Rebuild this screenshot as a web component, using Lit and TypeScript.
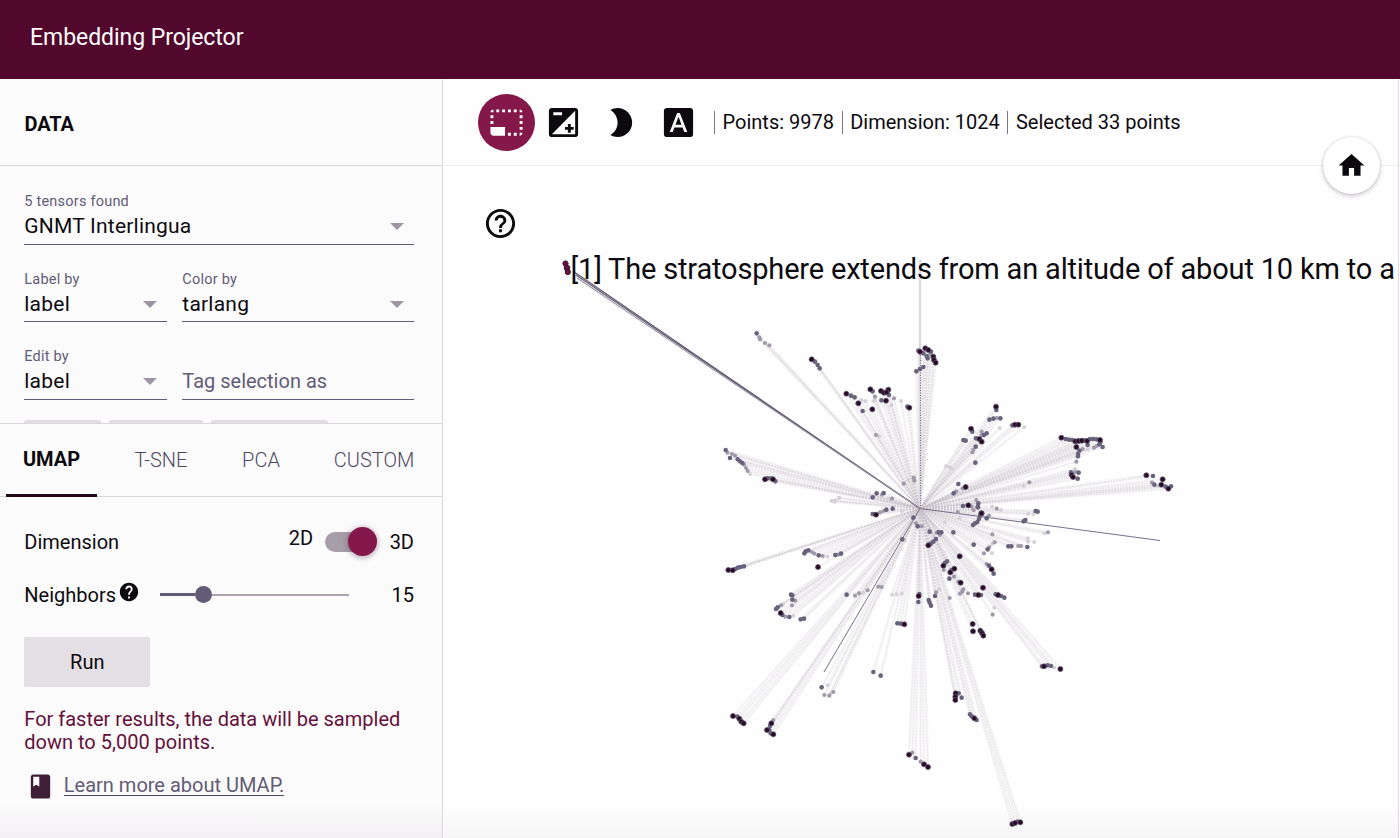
import { LitElement, html, svg, css } from "lit";
import { customElement, property } from "lit/decorators.js";

type Shade = "d" | "s" | "g" | "l";
type Point = { x: number; y: number; shade: Shade };

/* Each cluster group has an origin and a scale of three units per pixel. */
const GROUPS: { ox: number; oy: number; pts: string }[] = [
  {
    ox: 550, oy: 250,
    pts: "620,250,s 628,262,g 630,268,g 645,279,g 658,286,g 785,328,d 795,335,s 803,345,s 809,355,s",
  },
  {
    ox: 820, oy: 320,
    pts: `300,95,d 295,92,s 316,85,d 325,90,d 333,95,s 340,110,d 342,120,d 347,128,d 310,100,s 320,108,s 323,115,s 331,103,g
    289,154,s 300,147,s 310,141,s 79,221,d 93,227,s 104,232,s 115,250,d 128,273,s 157,268,d 124,240,l 136,243,l 160,243,l 165,240,l 165,230,g
    151,208,d 158,214,s 183,213,d 192,218,d 205,209,d 200,217,d 207,225,s 222,235,g 243,243,l 184,241,s 198,242,d 214,256,l
    262,260,s 268,263,d 168,345,g 178,349,l 281,473,g 283,482,g 265,480,l 251,491,g
    528,260,d 529,270,s 508,299,s 520,296,s 530,294,g 541,295,s 539,324,l 577,316,s 585,314,d 595,314,d 613,321,l
    453,326,d 457,335,s 430,360,s 437,362,s 468,355,s 478,357,d 485,365,d 485,335,g 485,345,g 492,345,s 500,340,s
    467,380,s 460,390,g 457,397,g 466,428,s 378,439,l 396,446,l 390,442,l 415,492,s 437,501,d 428,505,g 401,520,s 408,514,g
    429,558,s 445,556,d 455,560,g 469,540,g 475,550,s 473,560,s 485,580,d 517,560,l 530,566,g 543,570,l 611,498,l 628,487,g
    158,532,s 170,520,s 191,519,s 186,524,g 205,536,l 216,536,g 158,582,s 168,584,d 180,577,g 190,573,g 199,569,s 218,566,s
    246,573,l 38,543,l 44,545,l 57,534,l`,
  },
  {
    ox: 1000, oy: 380,
    pts: `184,173,d 197,177,s 207,179,s 217,180,s 226,184,d 235,183,d 245,182,d 253,181,s 261,183,d 270,177,s 280,177,s 290,178,s
    300,180,d 301,187,s 298,193,s 308,201,s 290,198,g 282,203,g 263,195,s 263,208,l 248,207,g 229,201,d 238,212,s 234,222,s
    234,229,s 229,245,g 225,267,l 213,277,s 226,276,g 236,278,s 215,285,d 219,291,d 233,296,s 439,286,d 459,288,s 488,298,d
    456,308,g 463,314,s 473,318,l 484,314,d 497,320,s 505,326,d 513,319,s 107,393,s 113,395,s 100,402,l 85,401,l 76,420,s
    71,424,s 144,457,g 133,460,l 84,475,l 84,485,l 103,486,l 82,501,s 63,498,g 55,498,g 34,499,s 25,499,s`,
  },
  {
    ox: 700, oy: 430,
    pts: `77,60,s 82,68,g 90,84,s 96,72,g 105,77,g 113,88,s 120,94,s 127,99,s 132,104,g 138,114,g 143,123,g 150,132,l
    195,148,d 203,145,s 213,145,s 219,148,d 226,154,s 395,212,l 405,211,l 417,203,l 85,420,d 98,421,d 106,417,s 114,413,s
    122,411,s 132,409,s 313,370,s 317,364,s 325,361,s 335,366,g 343,371,g 356,376,s 368,378,g 382,380,l 406,375,s 414,374,g
    423,371,s 354,411,d 273,494,s 277,496,s 277,509,s 286,512,g 276,526,g 250,522,l 243,526,g 233,532,s 228,537,s 242,549,d
    247,555,s 256,560,g 268,561,s 280,557,l 302,568,s 312,566,s 440,494,s 465,497,g 477,490,g 490,489,l 503,481,g
    535,470,g 545,471,g 576,494,l 590,493,l 605,491,l 592,580,s 602,581,s 613,583,d 607,328,s 615,332,l 640,263,s
    648,280,g 653,289,s`,
  },
  {
    ox: 880, oy: 480,
    pts: `233,96,g 238,115,l 294,82,s 281,90,g 304,100,d 300,108,s 297,117,s 292,126,s 285,130,s 279,135,s 320,115,s 327,107,g
    125,139,g 194,126,l 149,155,s 170,158,g 176,157,s 184,157,s 220,157,s 180,165,g 168,177,s 160,185,s 153,191,s 145,196,d
    281,194,s 337,163,g 344,187,g 336,192,l 328,201,g 323,208,s 312,220,g 336,220,l 239,229,d 201,244,s 195,249,s 190,257,d
    191,270,g 223,266,d 215,270,s 211,277,d 222,290,g 208,296,s 242,308,d 235,305,g 320,252,g 327,257,s 335,268,d 341,281,s
    309,323,d 250,328,g 247,335,g 240,341,g 264,340,g 285,344,s 295,345,d 303,345,s 347,343,s 354,345,d 363,348,s 373,353,s
    343,383,l 338,404,g 209,354,g 177,328,l 168,337,g 165,348,s 116,348,d 118,342,s 115,366,s 146,360,s 149,368,s 153,377,s
    278,432,d 279,454,d 301,452,d 306,459,d 310,467,d`,
  },
  {
    ox: 710, oy: 580,
    pts: `69,408,d 82,410,s 88,416,d 94,425,d 101,430,d 190,420,g 184,430,d 180,438,s 171,450,d 178,450,s 182,460,s 190,463,d
    335,322,s 353,316,l 343,345,g 358,347,g 362,340,l 370,336,g 490,276,s 512,287,s 597,524,d 607,518,g 617,534,s 632,545,g
    642,553,d 654,561,d`,
  },
  {
    ox: 880, oy: 640,
    pts: `227,160,d 226,170,d 226,180,d 236,160,s 245,173,s 270,223,s 275,229,s 283,235,d 290,240,s 397,552,d 405,549,d
    413,545,s 421,547,d 486,79,s 492,79,d 503,76,s 513,78,s 523,83,l 541,87,d`,
  },
];

const POINTS: Point[] = GROUPS.flatMap((g) =>
  g.pts.trim().split(/\s+/).map((t) => {
    const [x, y, shade] = t.split(",");
    return { x: g.ox + Number(x) / 3, y: g.oy + Number(y) / 3, shade: shade as Shade };
  })
);

const RADIUS: Record<Shade, number> = { d: 2.5, s: 2.3, g: 2.1, l: 2 };

const ICONS: Record<string, string> = {
  select:
    "M23 15h-2v2h2v-2zm0-4h-2v2h2v-2zm0 8h-2v2c1 0 2-1 2-2zM15 3h-2v2h2V3zm8 4h-2v2h2V7zm-2-4v2h2c0-1-1-2-2-2zM3 21h8v-6H1v4c0 1.1.9 2 2 2zM3 7H1v2h2V7zm12 12h-2v2h2v-2zm4-16h-2v2h2V3zm0 16h-2v2h2v-2zM3 3C2 3 1 4 1 5h2V3zm0 8H1v2h2v-2zm8-8H9v2h2V3zM7 3H5v2h2V3z",
  exposure:
    "M15 17v2h2v-2h2v-2h-2v-2h-2v2h-2v2h2zm5-15H4c-1.1 0-2 .9-2 2v16c0 1.1.9 2 2 2h16c1.1 0 2-.9 2-2V4c0-1.1-.9-2-2-2zM5 5h6v2H5V5zm15 15H4L20 4v16z",
  moon: "M10 2c-1.82 0-3.53.5-5 1.35C7.99 5.08 10 8.3 10 12s-2.01 6.92-5 8.65C6.47 21.5 8.18 22 10 22c5.52 0 10-4.48 10-10S15.52 2 10 2z",
  labels:
    "M9.93 13.5h4.14L12 7.98zM20 2H4c-1.1 0-2 .9-2 2v16c0 1.1.9 2 2 2h16c1.1 0 2-.9 2-2V4c0-1.1-.9-2-2-2zm-4.05 16.5l-1.14-3H9.17l-1.12 3H5.96l5.11-13h1.86l5.11 13h-2.09z",
  home: "M10 20v-6h4v6h5v-8h3L12 3 2 12h3v8z",
  help: "M12 2C6.48 2 2 6.48 2 12s4.48 10 10 10 10-4.48 10-10S17.52 2 12 2zm1 17h-2v-2h2v2zm2.07-7.75l-.9.92C13.45 12.9 13 13.5 13 15h-2v-.5c0-1.1.45-2.1 1.17-2.83l1.24-1.26c.37-.36.59-.86.59-1.41 0-1.1-.9-2-2-2s-2 .9-2 2H8c0-2.21 1.79-4 4-4s4 1.79 4 4c0 .88-.36 1.68-.93 2.25z",
  helpOutline:
    "M11 18h2v-2h-2v2zm1-16C6.48 2 2 6.48 2 12s4.48 10 10 10 10-4.48 10-10S17.52 2 12 2zm0 18c-4.41 0-8-3.59-8-8s3.59-8 8-8 8 3.59 8 8-3.59 8-8 8zm0-14c-2.21 0-4 1.79-4 4h2c0-1.1.9-2 2-2s2 .9 2 2c0 2-3 1.75-3 5h2c0-2.25 3-2.5 3-5 0-2.21-1.79-4-4-4z",
  book: "M18 2H6c-1.1 0-2 .9-2 2v16c0 1.1.9 2 2 2h12c1.1 0 2-.9 2-2V4c0-1.1-.9-2-2-2zM6 4h5v8l-2.5-1.5L6 12V4z",
};

@customElement("md-icon")
class MdIcon extends LitElement {
  @property() name = "";
  static styles = css`
    :host { display: inline-flex; width: 35px; height: 35px; flex: none; }
    svg { width: 100%; height: 100%; fill: currentColor; display: block; }
  `;
  render() {
    return html`<svg viewBox="0 0 24 24" aria-hidden="true"><path d=${ICONS[this.name]} /></svg>`;
  }
}

@customElement("select-field")
class SelectField extends LitElement {
  @property() label = "";
  @property() value = "";
  @property({ type: Boolean }) plain = false;
  static styles = css`
    :host { display: block; color: #0c0a0e; }
    .field { height: 51.5px; box-sizing: border-box; border-bottom: 1.5px solid #625c76; }
    .label { height: 16px; line-height: 17px; font-size: 14.5px; letter-spacing: .22px; color: #625c76; white-space: pre; }
    .row { height: 33.5px; display: flex; align-items: center; justify-content: space-between; padding-right: 10px; }
    .value { font-size: 21px; line-height: 33px; letter-spacing: .22px; white-space: nowrap; padding-top: 2px; }
    .plain { color: #625c76; font-size: 20px; letter-spacing: 0; }
    .arrow { width: 0; height: 0; border: 7px solid transparent; border-top-color: #9d95a4; border-bottom: 0; margin-top: 2px; }
  `;
  render() {
    return html`<div class="field">
      <div class="label">${this.label || " "}</div>
      <div class="row">
        <span class="value ${this.plain ? "plain" : ""}">${this.value}</span>
        ${this.plain ? "" : html`<span class="arrow"></span>`}
      </div>
    </div>`;
  }
}

@customElement("side-panel")
class SidePanel extends LitElement {
  static styles = css`
    :host { display: flex; flex-direction: column; width: 443px; box-sizing: border-box; border-right: 1.5px solid #dbd7dc; background: linear-gradient(#fcfbfc 0 725px, #f2f0f2 759px); color: #0c0a0e; flex: none; }
    .title { height: 87px; box-sizing: border-box; border-bottom: 1px solid #dbd7dc; padding: 3px 24.5px 0; display: flex; align-items: center; font-weight: 700; font-size: 20px; letter-spacing: -.1px; flex: none; }
    .data { height: 257px; box-sizing: border-box; overflow: hidden; padding: 27px 28.5px 0 24.3px; display: flex; flex-direction: column; gap: 26px; flex: none; }
    .pair { display: grid; grid-template-columns: 143px 1fr; gap: 15px; }
    .chips { display: flex; gap: 8px; margin-top: -5.5px; }
    .chip { height: 40px; border-radius: 3px; background: #e0dce1; flex: none; }
    .c1 { width: 77px; } .c2 { width: 94px; } .c3 { width: 117px; }
    .tabs { height: 74px; box-sizing: border-box; border-top: 1px solid #dbd7dc; border-bottom: 1px solid #dbd7dc; display: flex; padding-left: 6px; flex: none; }
    .tab { display: flex; align-items: center; justify-content: center; font-size: 20px; font-weight: 300; color: #4e4862; box-sizing: border-box; height: 73px; padding-bottom: 1px; }
    .active { width: 91px; font-weight: 700; color: #0c0a0e; border-bottom: 3px solid #210816; padding-bottom: 0; }
    .t2 { width: 128px; } .t3 { width: 72px; } .t4 { width: 154px; margin-right: -9px; }
    .controls { padding: 18px 28px 0 24.3px; font-size: 20px; }
    .row { display: flex; align-items: center; height: 53px; }
    .grow { flex: 1; }
    .two { padding-bottom: 8px; }
    .toggle { width: 51.5px; height: 29px; margin: 0 13px 0 12px; display: flex; align-items: center; }
    .track { width: 48px; height: 20px; border-radius: 10px; background: #a79ea9; display: flex; align-items: center; justify-content: flex-end; }
    .knob { width: 29px; height: 29px; border-radius: 50%; background: #84184b; margin-right: -4px; box-shadow: 0 1px 5px 1px rgba(60, 40, 60, .35); flex: none; }
    .mini { width: 22px; height: 22px; margin: -5px 0 0 2px; }
    .slider { width: 189px; height: 18px; margin-left: 20px; display: flex; align-items: center; }
    .fill { width: 35px; height: 2.5px; background: #625c76; }
    .thumb { width: 17px; height: 17px; border-radius: 50%; background: #625c76; }
    .rest { flex: 1; height: 2px; background: #aaa2ad; }
    .run { font: inherit; color: inherit; border: 0; padding: 0; display: block; margin-top: 16.3px; width: 126px; height: 49.5px; border-radius: 2px; background: #e3dfe4; }
    .note { margin: 21.2px 0 0; line-height: 23px; color: #65103b; font-size: 20px; white-space: nowrap; }
    .learn { display: flex; align-items: center; height: 30px; margin-top: 18px; }
    .book { width: 29px; height: 29px; margin-left: 2px; color: #3f1f38; }
    .link { color: #625c76; margin: -2px 0 0 8.5px; line-height: 20px; border-bottom: 1px solid #4c4560; white-space: nowrap; }
  `;
  render() {
    return html`
      <div class="title">DATA</div>
      <div class="data">
        <select-field label="5 tensors found" value="GNMT Interlingua"></select-field>
        <div class="pair">
          <select-field label="Label by" value="label"></select-field>
          <select-field label="Color by" value="tarlang"></select-field>
        </div>
        <div class="pair">
          <select-field label="Edit by" value="label"></select-field>
          <select-field plain value="Tag selection as"></select-field>
        </div>
        <div class="chips"><span class="chip c1"></span><span class="chip c2"></span><span class="chip c3"></span></div>
      </div>
      <div class="tabs">
        <div class="tab active">UMAP</div>
        <div class="tab t2">T-SNE</div>
        <div class="tab t3">PCA</div>
        <div class="tab t4">CUSTOM</div>
      </div>
      <div class="controls">
        <div class="row">
          <span>Dimension</span><span class="grow"></span><span class="two">2D</span>
          <span class="toggle"><span class="track"><span class="knob"></span></span></span><span>3D</span>
        </div>
        <div class="row">
          <span>Neighbors</span><md-icon class="mini" name="help"></md-icon>
          <span class="slider"><span class="fill"></span><span class="thumb"></span><span class="rest"></span></span>
          <span class="grow"></span><span>15</span>
        </div>
        <button class="run">Run</button>
        <p class="note">For faster results, the data will be sampled<br />down to 5,000 points.</p>
        <div class="learn"><md-icon class="book" name="book"></md-icon><a class="link">Learn more about UMAP.</a></div>
      </div>
    `;
  }
}

@customElement("scatter-plot")
class ScatterPlot extends LitElement {
  static styles = css`
    :host { display: block; flex: 1; min-height: 0; }
    svg { display: block; width: 954px; height: 672px; }
    .ray { stroke: #c9c2cb; stroke-width: .7; opacity: .4; stroke-dasharray: 2 1; }
    .band { stroke: #f4f2f4; stroke-width: 3; opacity: .55; }
    .axis { stroke: #77718a; stroke-width: 1; }
    .sel { stroke: #5c566e; stroke-width: 1.1; }
    .faint { stroke: #a098a6; }
    .up { stroke: #dedadf; stroke-width: 2.5; }
    .dots { stroke: #77718a; stroke-width: 1; stroke-dasharray: 1 1.5; }
    .d { fill: #2b0a26; stroke: #5a546c; stroke-width: .8; }
    .s { fill: #68637c; } .g { fill: #a099aa; } .l { fill: #d6d1d8; }
    .pick { fill: #6b1240; stroke: #33112c; stroke-width: 1; }
    .caption { font: 29px Roboto, "Liberation Sans", sans-serif; fill: #0c0a0e; }
  `;
  render() {
    const order: Shade[] = ["l", "g", "s", "d"];
    return html`<svg viewBox="444 166 954 672">
      ${POINTS.map((p) => svg`<line class="band" x1="920" y1="508.5" x2=${p.x} y2=${p.y} />`)}
      ${POINTS.map((p) => svg`<line class="ray" x1="920" y1="508.5" x2=${p.x} y2=${p.y} />`)}
      <line class="up" x1="920" y1="260" x2="920" y2="508" />
      <line class="dots" x1="920.5" y1="350" x2="920.5" y2="508" />
      <line class="axis" x1="920" y1="508.5" x2="1160" y2="540.5" />
      <line class="axis" x1="920" y1="508.5" x2="824" y2="672" />
      <line class="sel" x1="920" y1="508.5" x2="575" y2="272.5" />
      <line class="sel" x1="920" y1="508.5" x2="576" y2="275" />
      <line class="sel faint" x1="920" y1="508.5" x2="577" y2="278" />
      ${order.map((s) =>
        POINTS.filter((p) => p.shade === s).map((p) => svg`<circle class=${s} cx=${p.x} cy=${p.y} r=${RADIUS[s]} />`)
      )}
      <circle class="pick" cx="565.5" cy="263.5" r="2.6" /><circle class="pick" cx="567" cy="268" r="2.8" /><circle class="pick" cx="567.8" cy="272" r="2.6" />
      <text class="caption" x="570.5" y="279" textLength="824.5">[1] The stratosphere extends from an altitude of about 10 km to a</text>
    </svg>`;
  }
}

@customElement("app-root")
class AppRoot extends LitElement {
  static styles = css`
    :host { display: flex; flex-direction: column; width: 1400px; height: 838px; overflow: hidden; font-family: Roboto, "Liberation Sans", sans-serif; background: #fefefe; color: #0c0a0e; }
    .header { height: 79px; box-sizing: border-box; background: #52082c; color: #fff; font-size: 23px; letter-spacing: -.05px; padding: 0 30px 5px; display: flex; align-items: center; flex: none; }
    .body { flex: 1; display: flex; min-height: 0; }
    .main { flex: 1; display: flex; flex-direction: column; position: relative; border-right: 1px solid #dedade; margin: 0 1px 0 1px; box-sizing: border-box; min-width: 0; background: linear-gradient(#fefefe 0 725px, #f6f5f6 759px); }
    .toolbar { height: 87px; box-sizing: border-box; border-bottom: 1.5px solid #efedef; display: flex; align-items: center; padding-left: 34px; flex: none; }
    .round { width: 57px; height: 57px; border-radius: 50%; background: #84184b; color: #fff; display: flex; align-items: center; justify-content: center; margin-right: 11.2px; }
    .icon { margin-right: 22.2px; }
    .last { margin-right: 18.5px; }
    .stat { font-size: 20px; line-height: 23px; border-left: 1.5px solid #7a7488; padding-left: 7.5px; margin-right: 7.7px; white-space: nowrap; }
    .home { position: absolute; right: 18.5px; top: 57.5px; width: 57px; height: 57px; border-radius: 50%; background: #fff; display: flex; align-items: center; justify-content: center; box-shadow: 0 2px 4px rgba(50, 30, 50, .24), 0 0 2px rgba(50, 30, 50, .2); }
    .house { width: 31px; height: 31px; }
    .hint { position: absolute; left: 39px; top: 127px; }
  `;
  render() {
    return html`
      <div class="header">Embedding Projector</div>
      <div class="body">
        <side-panel></side-panel>
        <div class="main">
          <div class="toolbar">
            <span class="round"><md-icon name="select"></md-icon></span>
            <md-icon class="icon" name="exposure"></md-icon>
            <md-icon class="icon" name="moon"></md-icon>
            <md-icon class="last" name="labels"></md-icon>
            <span class="stat">Points: 9978</span>
            <span class="stat">Dimension: 1024</span>
            <span class="stat">Selected 33 points</span>
          </div>
          <scatter-plot></scatter-plot>
          <span class="home"><md-icon class="house" name="home"></md-icon></span>
          <md-icon class="hint" name="helpOutline"></md-icon>
        </div>
      </div>
    `;
  }
}
